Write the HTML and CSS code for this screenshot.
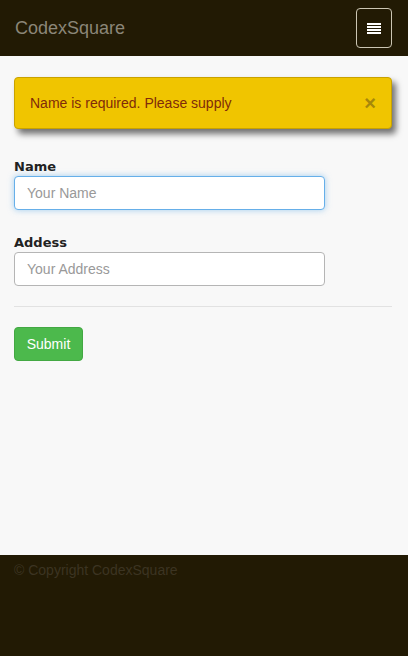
FILE: index.html
```html
<!DOCTYPE html>
<html lang="en">
<head>
  <meta charset="UTF-8" />
  <meta name="viewport" content="width=device-width, initial-scale=1.0"/>
  <title>CodexSquare</title>
  <link rel="stylesheet" href="styles.css">
</head>
<body>

  <header class="navbar">
    <a href="#" class="brand">CodexSquare</a>
    <button class="toggle" title="Menu">
      <span class="bar"></span>
      <span class="bar"></span>
      <span class="bar"></span>
      <span class="bar"></span>
    </button>
  </header>

  <main class="content">
    <div class="alert">
      <span>Name is required. Please supply</span>
      <span class="close">&times;</span>
    </div>

    <form class="form">
      <div class="field">
        <label for="name">Name</label>
        <input type="text" id="name" class="input focused" placeholder="Your Name" />
      </div>
      <div class="field">
        <label for="address">Addess</label>
        <input type="text" id="address" class="input" placeholder="Your Address" />
      </div>
      <hr />
      <button type="button" class="btn-submit">Submit</button>
    </form>
  </main>

  <footer>
    &copy; Copyright CodexSquare
  </footer>

</body>
</html>
```

FILE: styles.css
```css
* {
  margin: 0;
  padding: 0;
  box-sizing: border-box;
  font-family: 'Liberation Sans', Arial, sans-serif;
}
body {
  background: #f8f8f8;
  color: #333;
  display: flex;
  flex-direction: column;
  min-height: 656px;
}
.navbar {
  background: #221a04;
  height: 56px;
  display: flex;
  justify-content: space-between;
  align-items: center;
  padding: 0 16px 0 15px;
}
.brand {
  color: #8b8678;
  font-size: 18px;
  text-decoration: none;
}
.toggle {
  width: 36px;
  height: 40px;
  background: transparent;
  border: 1px solid #ccc6b4;
  border-radius: 4px;
  display: flex;
  flex-direction: column;
  justify-content: center;
  align-items: center;
  gap: 1px;
}
.toggle .bar {
  display: block;
  width: 14px;
  height: 2px;
  background: #fff;
}
.content {
  flex: 1;
  padding: 21px 16px 0 14px;
}
.alert {
  background: #f0c500;
  border: 1px solid #c9a200;
  border-radius: 4px;
  height: 52px;
  display: flex;
  justify-content: space-between;
  align-items: center;
  padding: 0 15px 0 15px;
  color: #7f2b0a;
  font-size: 14px;
  box-shadow: 4px 5px 6px rgba(0,0,0,0.55);
}
.close {
  color: #a6880a;
  font-size: 20px;
  font-weight: bold;
}
.form {
  margin-top: 30px;
}
.field {
  margin-bottom: 25px;
}
.field label {
  display: block;
  font-family: 'DejaVu Sans', sans-serif;
  font-weight: bold;
  font-size: 13px;
  color: #222;
  margin-bottom: 2px;
}
.input {
  width: 311px;
  height: 34px;
  padding: 0 12px;
  font-size: 14px;
  color: #555;
  background: #fff;
  border: 1px solid #b5b5b5;
  border-radius: 4px;
}
.input::placeholder {
  color: #999;
}
.input.focused {
  border-color: #66afe9;
  box-shadow: 0 0 6px rgba(102,175,233,0.6);
  outline: none;
}
hr {
  border: none;
  border-top: 1px solid #e2e2e2;
  margin: -5px 0 20px;
}
.btn-submit {
  background: #4cb94c;
  color: #fff;
  border: 1px solid #43a843;
  border-radius: 4px;
  font-size: 14px;
  width: 69px;
  height: 34px;
}
footer {
  background: #221a04;
  height: 101px;
  margin-top: auto;
  padding: 7px 14px;
  color: #3c3422;
  font-size: 14px;
}
```
